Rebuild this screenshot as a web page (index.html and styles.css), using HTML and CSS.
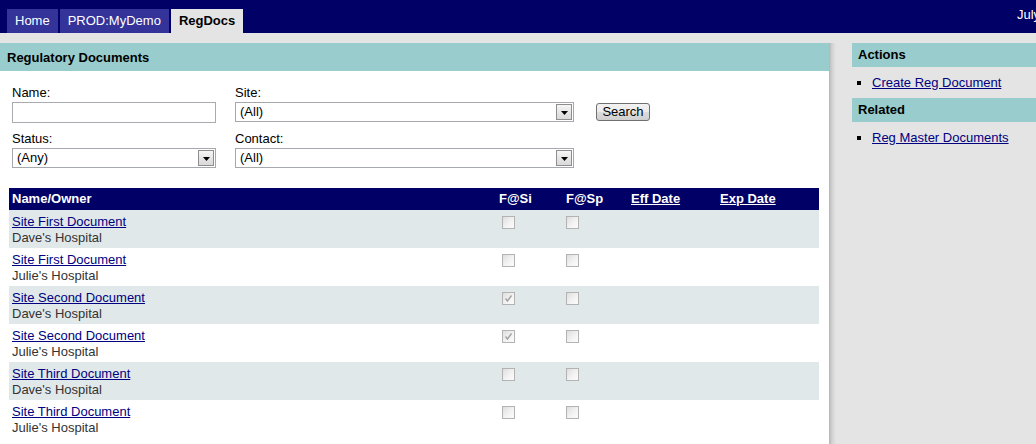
FILE: index.html
```html
<!DOCTYPE html>
<html>
<head>
<meta charset="utf-8">
<title>Regulatory Documents</title>
<link rel="stylesheet" href="styles.css">
</head>
<body>
<header class="topbar">
  <nav class="tabs">
    <a class="tab" href="#">Home</a>
    <a class="tab" href="#">PROD:MyDemo</a>
    <a class="tab tab-active" href="#">RegDocs</a>
  </nav>
  <div class="date">July 26, 2011</div>
</header>
<div class="layout">
  <main class="main">
    <h1 class="panel-title">Regulatory Documents</h1>
    <form class="filters">
      <div class="field">
        <label class="field-label">Name:</label>
        <div class="text-input"></div>
      </div>
      <div class="field">
        <label class="field-label">Site:</label>
        <div class="select"><span class="select-value">(All)</span><span class="select-arrow"><svg width="7" height="4" viewBox="0 0 7 4"><path d="M0 0H7L3.5 4Z" fill="#000"/></svg></span></div>
      </div>
      <div class="field field-button">
        <button type="button" class="btn">Search</button>
      </div>
      <div class="field">
        <label class="field-label">Status:</label>
        <div class="select"><span class="select-value">(Any)</span><span class="select-arrow"><svg width="7" height="4" viewBox="0 0 7 4"><path d="M0 0H7L3.5 4Z" fill="#000"/></svg></span></div>
      </div>
      <div class="field">
        <label class="field-label">Contact:</label>
        <div class="select"><span class="select-value">(All)</span><span class="select-arrow"><svg width="7" height="4" viewBox="0 0 7 4"><path d="M0 0H7L3.5 4Z" fill="#000"/></svg></span></div>
      </div>
    </form>

    <table class="doc-table">
      <colgroup>
        <col class="c-name"><col class="c-si"><col class="c-sp"><col class="c-eff"><col class="c-exp">
      </colgroup>
      <thead>
        <tr><th>Name/Owner</th><th>F@Si</th><th>F@Sp</th><th><a href="#">Eff Date</a></th><th><a href="#">Exp Date</a></th></tr>
      </thead>
      <tbody>
        <tr class="alt">
          <td><a href="#">Site First Document</a><div class="owner">Dave's Hospital</div></td>
          <td><span class="cb cb-si"></span></td><td><span class="cb"></span></td><td></td><td></td>
        </tr>
        <tr>
          <td><a href="#">Site First Document</a><div class="owner">Julie's Hospital</div></td>
          <td><span class="cb cb-si"></span></td><td><span class="cb"></span></td><td></td><td></td>
        </tr>
        <tr class="alt">
          <td><a href="#">Site Second Document</a><div class="owner">Dave's Hospital</div></td>
          <td><span class="cb cb-si"><svg width="11" height="11" viewBox="0 0 11 11"><path d="M2.5 5.5L4.5 8L8.5 2.5" fill="none" stroke="#a3a3a3" stroke-width="1.4"/></svg></span></td><td><span class="cb"></span></td><td></td><td></td>
        </tr>
        <tr>
          <td><a href="#">Site Second Document</a><div class="owner">Julie's Hospital</div></td>
          <td><span class="cb cb-si"><svg width="11" height="11" viewBox="0 0 11 11"><path d="M2.5 5.5L4.5 8L8.5 2.5" fill="none" stroke="#a3a3a3" stroke-width="1.4"/></svg></span></td><td><span class="cb"></span></td><td></td><td></td>
        </tr>
        <tr class="alt">
          <td><a href="#">Site Third Document</a><div class="owner">Dave's Hospital</div></td>
          <td><span class="cb cb-si"></span></td><td><span class="cb"></span></td><td></td><td></td>
        </tr>
        <tr>
          <td><a href="#">Site Third Document</a><div class="owner">Julie's Hospital</div></td>
          <td><span class="cb cb-si"></span></td><td><span class="cb"></span></td><td></td><td></td>
        </tr>
      </tbody>
    </table>
  </main>

  <aside class="sidebar">
    <h2 class="side-title">Actions</h2>
    <ul class="side-list">
      <li><a href="#">Create Reg Document</a></li>
    </ul>
    <h2 class="side-title">Related</h2>
    <ul class="side-list">
      <li><a href="#">Reg Master Documents</a></li>
    </ul>
  </aside>
</div>
</body>
</html>
```

FILE: styles.css
```css
* { box-sizing: border-box; }

html, body {
  margin: 0;
  height: 444px;
  overflow: hidden;
}

body {
  background: #e4e4e4;
  font-family: "Liberation Sans", Arial, sans-serif;
  font-size: 13px;
  color: #000;
}

a { color: #000080; }

/* top bar */
.topbar {
  height: 33px;
  background: #000066;
  display: flex;
  align-items: flex-end;
  padding-left: 7px;
}

.tabs {
  display: flex;
  gap: 2px;
}

.tab {
  display: block;
  height: 24px;
  line-height: 24px;
  padding: 0 8px;
  background: #333399;
  color: #fff;
  text-decoration: none;
}

.tab-active {
  background: #e4e4e4;
  color: #000;
  font-weight: bold;
}

.date {
  margin-left: auto;
  align-self: flex-start;
  width: 19px;
  overflow: hidden;
  white-space: nowrap;
  color: #fff;
  line-height: 16px;
  padding-top: 7px;
}

/* layout */
.layout {
  display: flex;
  margin-top: 10px;
  height: 401px;
}

.main {
  width: 829px;
  flex: none;
  background: #fff;
}

.panel-title {
  margin: 0;
  height: 28px;
  padding: 1px 7px 0;
  line-height: 27px;
  font-size: 13px;
  font-weight: bold;
  background: #99cccc;
}

/* filters */
.filters {
  display: grid;
  grid-template-columns: 204px 339px auto;
  column-gap: 19px;
  row-gap: 8px;
  padding: 14px 0 0 12px;
  margin: 0;
}

.field-label {
  display: block;
  line-height: 16px;
  margin-bottom: 1px;
}

.text-input {
  height: 21px;
  border: 1px solid #a9abb0;
  background: #fff;
}

.select {
  display: flex;
  height: 20px;
  border: 1px solid #a5a8ad;
  background: #fff;
}

.select-value {
  flex: 1;
  padding-left: 4px;
  line-height: 18px;
}

.select-arrow {
  width: 16px;
  height: 16px;
  margin: 1px;
  border: 1px solid #8e8e8e;
  background: linear-gradient(#f6f6f6, #e6e6e6 50%, #d9d9d9);
  display: flex;
  align-items: center;
  justify-content: center;
  padding-top: 2px;
}

.field-button {
  align-self: end;
  padding-left: 3px;
  margin-bottom: 2px;
}

.btn {
  display: block;
  width: 54px;
  height: 18px;
  padding: 0;
  border: 1px solid #707070;
  border-radius: 3px;
  background: linear-gradient(#f2f2f2, #ebebeb 50%, #dddddd 50%, #cfcfcf);
  font-family: "Liberation Sans", Arial, sans-serif;
  font-size: 13px;
  line-height: 16px;
  color: #000;
}

/* table */
.doc-table {
  margin: 20px 0 0 9px;
  width: 810px;
  table-layout: fixed;
  border-collapse: collapse;
}

.c-name { width: 487px; }
.c-si { width: 67px; }
.c-sp { width: 65px; }
.c-eff { width: 89px; }
.c-exp { width: 102px; }

.doc-table th {
  background: #000066;
  color: #fff;
  font-weight: bold;
  text-align: left;
  height: 22px;
  line-height: 22px;
  padding: 0 3px;
}

.doc-table th a { color: #fff; }

.doc-table td {
  vertical-align: top;
  padding: 4px 3px 2px;
  line-height: 16px;
  height: 38px;
}

.doc-table tr.alt td { background: #e1e8ea; }

.owner { color: #333; }

.cb {
  display: block;
  width: 13px;
  height: 13px;
  margin-top: 2px;
  border: 1px solid #b3b3b3;
  background: linear-gradient(135deg, #dedede, #f4f4f4 60%, #fbfbfb);
}

.cb svg { display: block; margin: 0; }

.cb-si { margin-left: 3px; }

/* sidebar */
.sidebar {
  flex: 1;
  background: linear-gradient(to right, #b4b4b4 0, #d2d2d2 3px, #e4e4e4 7px);
  padding-left: 23px;
}

.side-title {
  margin: 0;
  height: 24px;
  line-height: 24px;
  padding-left: 6px;
  font-size: 13px;
  font-weight: bold;
  background: #99cccc;
}

.side-list {
  list-style: none;
  margin: 0;
  padding: 8px 0 7px;
}

.side-list li {
  display: flex;
  align-items: center;
  line-height: 16px;
}

.side-list li::before {
  content: "";
  width: 4px;
  height: 4px;
  background: #000;
  margin: 0 11px 0 5px;
}
```
